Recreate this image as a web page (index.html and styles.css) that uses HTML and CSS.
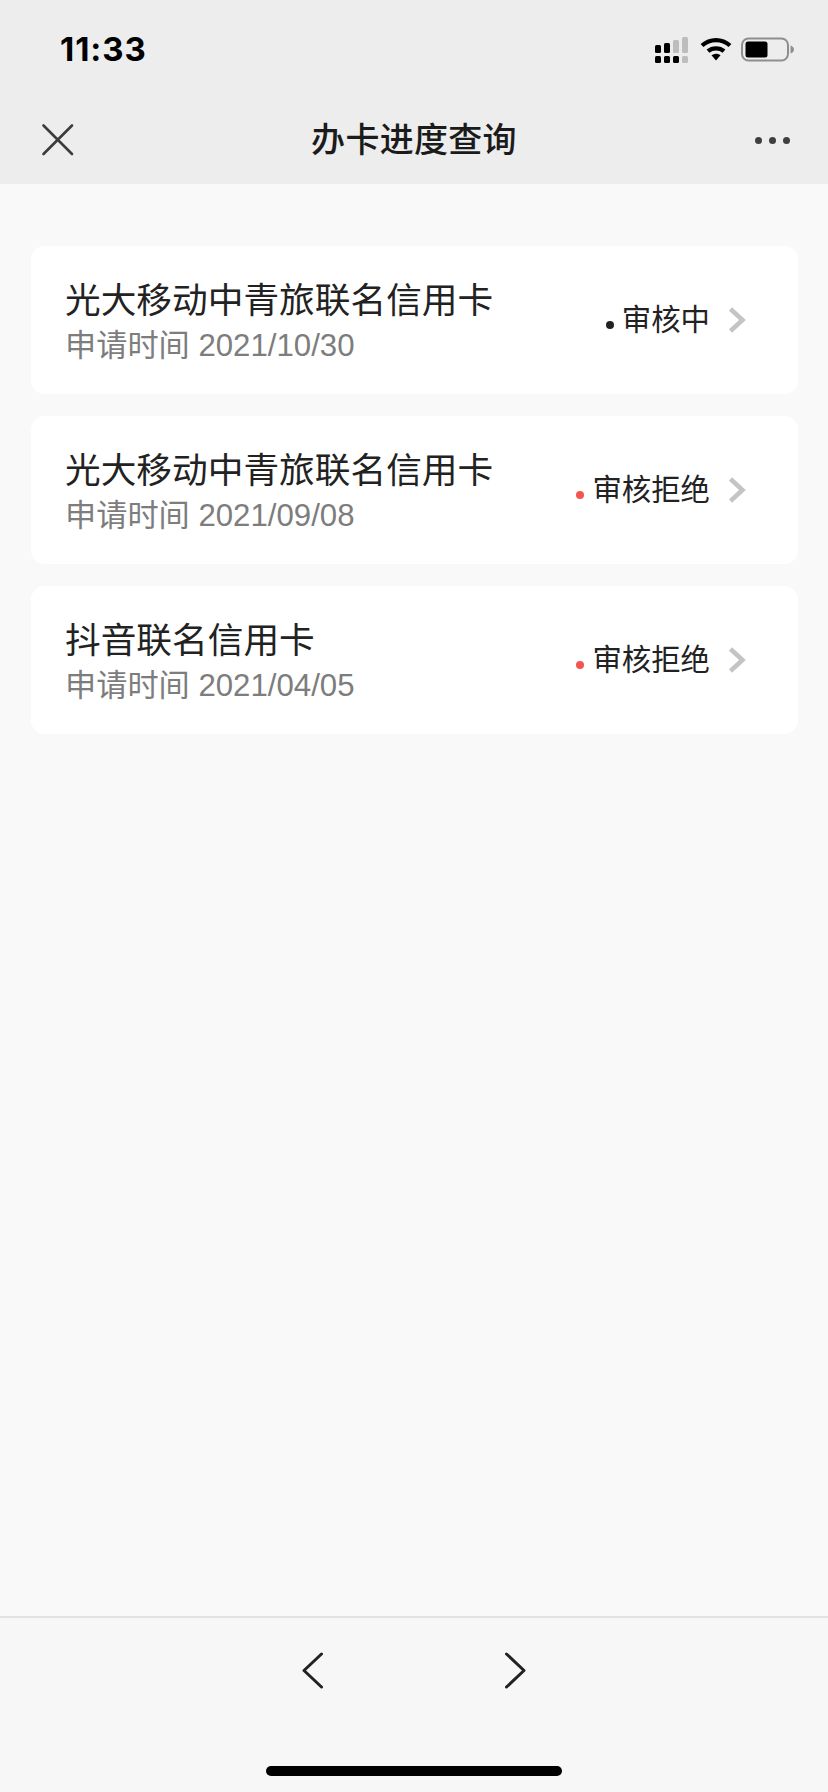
FILE: index.html
```html
<!DOCTYPE html>
<html lang="zh-CN">
<head>
<meta charset="utf-8">
<title>办卡进度查询</title>
<link rel="stylesheet" href="styles.css">
</head>
<body>
<div class="app">
  <header class="header">
    <div class="statusbar">
      <span class="time">11:33</span>
      <div class="sysicons">
        <svg class="signal" width="34" height="27" viewBox="0 0 34 27">
          <rect x="0" y="8" width="6" height="8" rx="1.500" fill="#000"/>
          <rect x="9" y="6" width="6" height="10" rx="1.500" fill="#000"/>
          <rect x="18" y="3" width="6" height="13" rx="1.500" fill="#bdbdbd"/>
          <rect x="27" y="0" width="6" height="16" rx="1.500" fill="#bdbdbd"/>
          <rect x="0" y="19" width="6" height="7" rx="1.500" fill="#000"/>
          <rect x="9" y="19" width="6" height="7" rx="1.500" fill="#000"/>
          <rect x="18" y="19" width="6" height="7" rx="1.500" fill="#000"/>
          <rect x="27" y="19" width="6" height="7" rx="1.500" fill="#bdbdbd"/>
        </svg>
        <svg class="wifi" width="32" height="24" viewBox="0 0 32 24">
          <path d="M2 8.500C10 1.200 22 1.200 30 8.500" fill="none" stroke="#000" stroke-width="4.200"/>
          <path d="M8 14.200C12.500 10.300 19.500 10.300 24 14.200" fill="none" stroke="#000" stroke-width="4.200"/>
          <path d="M11.500 18.300C14.300 16.300 17.700 16.300 20.500 18.300L16 23.500Z" fill="#000"/>
        </svg>
        <svg class="battery" width="54" height="26" viewBox="0 0 54 26">
          <rect x="1" y="1.500" width="46" height="22" rx="6.500" fill="none" stroke="#8e8e8e" stroke-width="2"/>
          <rect x="4.500" y="4.500" width="22" height="16" rx="2.500" fill="#000"/>
          <path d="M49.500 8.500C52 9.500 53 11 53 12.500C53 14 52 15.500 49.500 16.500Z" fill="#8e8e8e"/>
        </svg>
      </div>
    </div>
    <nav class="navbar">
      <svg class="close" width="34" height="34" viewBox="0 0 34 34">
        <path d="M2.500 2.500L31 31M31 2.500L2.500 31" stroke="#3c3c3c" stroke-width="2.600" stroke-linecap="round" fill="none"/>
      </svg>
      <h1 class="title">办卡进度查询</h1>
      <div class="more"><i></i><i></i><i></i></div>
    </nav>
  </header>

  <main class="list">
    <section class="card">
      <div class="info">
        <div class="name">光大移动中青旅联名信用卡</div>
        <div class="date">申请时间 2021/10/30</div>
      </div>
      <div class="state"><i class="dot"></i><span>审核中</span></div>
      <svg class="arrow" width="20" height="28" viewBox="0 0 20 28"><path d="M3.500 3L15.500 14L3.500 25" fill="none" stroke="#c4c4c4" stroke-width="4.500"/></svg>
    </section>
    <section class="card">
      <div class="info">
        <div class="name">光大移动中青旅联名信用卡</div>
        <div class="date">申请时间 2021/09/08</div>
      </div>
      <div class="state"><i class="dot red"></i><span>审核拒绝</span></div>
      <svg class="arrow" width="20" height="28" viewBox="0 0 20 28"><path d="M3.500 3L15.500 14L3.500 25" fill="none" stroke="#c4c4c4" stroke-width="4.500"/></svg>
    </section>
    <section class="card">
      <div class="info">
        <div class="name">抖音联名信用卡</div>
        <div class="date">申请时间 2021/04/05</div>
      </div>
      <div class="state"><i class="dot red"></i><span>审核拒绝</span></div>
      <svg class="arrow" width="20" height="28" viewBox="0 0 20 28"><path d="M3.500 3L15.500 14L3.500 25" fill="none" stroke="#c4c4c4" stroke-width="4.500"/></svg>
    </section>
  </main>

  <footer class="footer">
    <div class="pager">
      <svg width="21" height="37" viewBox="0 0 21 37"><path d="M19.500 2L2 18.500L19.500 35" fill="none" stroke="#222" stroke-width="3" stroke-linecap="round" stroke-linejoin="round"/></svg>
      <svg width="21" height="37" viewBox="0 0 21 37"><path d="M1.500 2L19 18.500L1.500 35" fill="none" stroke="#222" stroke-width="3" stroke-linecap="round" stroke-linejoin="round"/></svg>
    </div>
    <div class="homebar"></div>
  </footer>
</div>
</body>
</html>
```

FILE: styles.css
```css
* {
  box-sizing: border-box;
}

html,
body {
  margin: 0;
  padding: 0;
}

body {
  font-family: "Liberation Sans", "Noto Sans CJK SC", sans-serif;
  background: #f9f9f9;
  color: #222;
}

.app {
  width: 828px;
  height: 1792px;
  display: flex;
  flex-direction: column;
}

.header {
  height: 184px;
  background: #ededed;
  display: flex;
  flex-direction: column;
}

.statusbar {
  height: 92px;
  padding: 26px 33px 0 60px;
  display: flex;
  justify-content: space-between;
  align-items: flex-start;
}

.time {
  font-family: Inter, "Liberation Sans", sans-serif;
  font-size: 33px;
  line-height: 46px;
  font-weight: 700;
  letter-spacing: 0.9px;
  color: #000;
}

.sysicons {
  display: flex;
  align-items: flex-start;
  gap: 9px;
  padding-top: 11px;
}

.signal {
  margin-right: 2px;
}

.navbar {
  flex: 1;
  padding: 4px 38px 0 41px;
  display: flex;
  align-items: center;
}

.title {
  flex: 1;
  margin: 0;
  padding-right: 2px;
  font-size: 34px;
  line-height: 48px;
  font-weight: 500;
  color: #1b1b1b;
  text-align: center;
  letter-spacing: 0.3px;
}

.more {
  display: flex;
  gap: 7px;
}

.more i {
  width: 7px;
  height: 7px;
  border-radius: 50%;
  background: #3f3f3f;
}

.list {
  flex: 1;
  padding: 62px 30px 0 31px;
  display: flex;
  flex-direction: column;
  gap: 22px;
}

.card {
  height: 148px;
  background: #fff;
  border-radius: 14px;
  padding: 0 51px 0 34px;
  display: flex;
  align-items: center;
}

.info {
  flex: 1;
  min-width: 0;
  padding-top: 4px;
}

.name {
  font-size: 35.700px;
  line-height: 46px;
  color: #222;
}

.date {
  font-size: 31.200px;
  line-height: 40px;
  color: #7d7d7d;
  margin-top: 2px;
}

.state {
  display: flex;
  align-items: center;
  font-size: 29.400px;
  line-height: 40px;
  color: #222;
  margin-right: 17px;
}

.dot {
  width: 8px;
  height: 8px;
  border-radius: 50%;
  background: #222;
  margin-right: 8px;
  margin-top: 10px;
}

.dot.red {
  background: #f2564f;
}

.footer {
  height: 176px;
  background: #f7f7f7;
  border-top: 2px solid #e2e2e2;
  display: flex;
  flex-direction: column;
  align-items: center;
}

.pager {
  width: 224px;
  padding-top: 34px;
  display: flex;
  justify-content: space-between;
  height: 148px;
}

.pager svg {
  display: block;
}

.homebar {
  width: 296px;
  height: 10px;
  border-radius: 5px;
  background: #000;
}
```
